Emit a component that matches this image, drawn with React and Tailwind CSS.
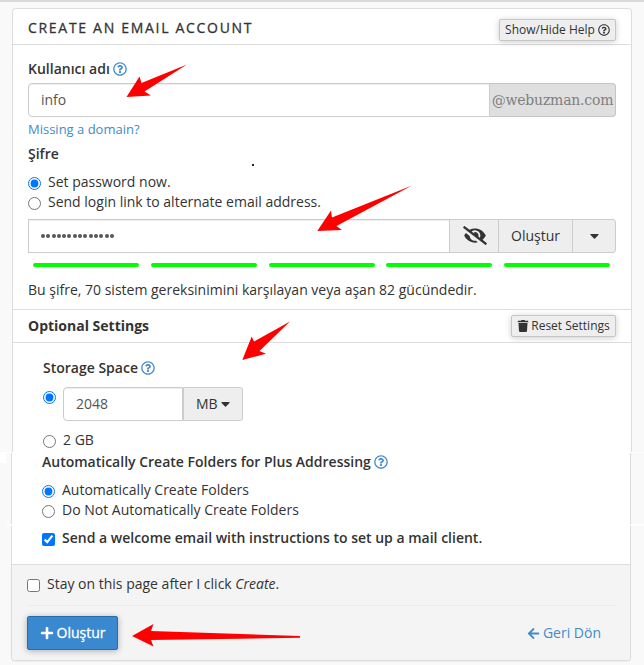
import { FaRegQuestionCircle, FaTrash, FaPlus, FaArrowLeft, FaEyeSlash } from 'react-icons/fa'

const STRENGTH_BARS = [1, 2, 3, 4, 5]

function HelpIcon() {
  return <FaRegQuestionCircle className="w-3.5 h-3.5 shrink-0 text-[#428bca]" />
}

function Caret() {
  return (
    <svg className="w-[9px] h-[5px]" viewBox="0 0 9 5" fill="currentColor">
      <path d="M0.8 0 H8.200 Q8.900 0.300 8.400 0.900 L5 4.600 Q4.500 5 4 4.600 L0.600 0.900 Q0.100 0.300 0.800 0 Z" />
    </svg>
  )
}

function Option({ type = 'radio', name, checked, className = '', children }) {
  return (
    <label className={`flex items-center gap-[7px] h-5 ${className}`}>
      <input type={type} name={name} defaultChecked={checked} className="m-0 mt-0.5 w-[13px] h-[13px] shrink-0" />
      <span className="whitespace-nowrap">{children}</span>
    </label>
  )
}

function SmallButton({ className = '', children }) {
  return (
    <button
      type="button"
      className={`flex items-center justify-center h-[22px] bg-[#eee] border border-[#c6c6c6] rounded-[2px] text-xs whitespace-nowrap shadow-[0_1px_6px_rgba(0,0,0,0.2)] ${className}`}
    >
      {children}
    </button>
  )
}

// Hand drawn pointers that lie over the form
function Pointers() {
  return (
    <svg className="absolute inset-0 pointer-events-none" width="644" height="665" viewBox="0 0 644 665" fill="#ff0000">
      <path d="M187 64.5 L141.500 83 L139.500 76.500 L126.500 97 L151 95.500 L144.500 91.500 Z" />
      <path d="M412 185.500 L332 217.500 L331 210.500 L317.300 231 L342 230 L336.500 226 Z" />
      <path d="M290 321.500 L254 341.500 L251.700 336.500 L242.300 360 L266 353.700 L259.500 351 Z" />
      <path d="M300 636 L151 631 L153.500 624 L132 636 L153.500 646.500 L151 640 L300 637.700 Z" />
    </svg>
  )
}

export default function App() {
  return (
    <div className="relative w-[644px] h-[665px] overflow-hidden bg-[#f9f9f9] border-t-2 border-[#dadada] pt-1.5 pl-3 font-['Open_Sans','Noto_Sans',sans-serif] text-sm leading-5 text-[#333]">
      <section className="w-[620px] h-[444px] bg-white border border-b-0 border-[#ddd] rounded-t-[4px]">
        <header className="flex items-start justify-between h-9 pl-[15px] pr-[15px] border-b border-[#ddd]">
          <h1 className="mt-[9px] text-sm tracking-[1.7px] [-webkit-text-stroke:0.3px_#333]">CREATE AN EMAIL ACCOUNT</h1>
          <SmallButton className="mt-2.5 w-[117px] gap-[3px]">
            Show/Hide Help <FaRegQuestionCircle className="w-3 h-3" />
          </SmallButton>
        </header>

        <div className="h-[265px] px-[15px] pt-3.5 border-b border-[#ddd]">
          <div className="flex items-center gap-[3.5px] font-semibold">
            Kullanıcı adı <HelpIcon />
          </div>
          <div className="flex h-[34px] mt-1">
            <div className="flex-1 flex items-center px-3 border border-[#ccc] rounded-l-[4px] text-[#555] shadow-[inset_0_1px_1px_rgba(0,0,0,0.075)]">info</div>
            <div className="w-[126px] flex items-center justify-center bg-[#dfdfdf] border border-l-0 border-[#c4c4c4] rounded-r-[4px] font-['DejaVu_Serif',serif] text-[14px] tracking-[-0.2px] text-[#808080]">@webuzman.com</div>
          </div>
          <a className="block mt-0.5 text-[13px] text-[#428bca]">Missing a domain?</a>
          <div className="mt-[5px] font-semibold">Şifre</div>
          <Option name="password" checked className="mt-2">Set password now.</Option>
          <Option name="password">Send login link to alternate email address.</Option>
          <div className="flex h-[34px] mt-[7px]">
            <div className="flex-1 flex items-center px-3 border border-[#ccc] shadow-[inset_0_1px_1px_rgba(0,0,0,0.075)]">
              <div className="flex gap-[1.3px]">
                {Array.from({ length: 14 }).map((_, i) => (
                  <span key={i} className="w-1 h-1 rounded-full bg-[#555]" />
                ))}
              </div>
            </div>
            <div className="w-12 flex items-center justify-center bg-[#eee] border-y border-[#ccc]">
              <FaEyeSlash className="w-[24px] h-[19px] mb-0.5 ml-0.5" />
            </div>
            <div className="w-[74px] flex items-center justify-center bg-[#eee] border-y border-l border-[#ccc]">Oluştur</div>
            <div className="w-11 flex items-center justify-center bg-[#eee] border border-[#ccc] rounded-r-[3px]">
              <Caret />
            </div>
          </div>
          <div className="flex justify-between mt-2.5 pl-[5px] pr-1.5">
            {STRENGTH_BARS.map((bar) => (
              <span key={bar} className="w-[106px] h-1 rounded-full bg-[#00ff00]" />
            ))}
          </div>
          <p className="mt-[13px]">Bu şifre, 70 sistem gereksinimini karşılayan veya aşan 82 gücündedir.</p>
        </div>

        <div className="flex items-center justify-between h-[33px] px-[15px] border-b border-[#ddd]">
          <h2 className="font-bold">Optional Settings</h2>
          <SmallButton className="w-[105px] gap-[2px]">
            <FaTrash className="w-3 h-3" /> Reset Settings
          </SmallButton>
        </div>

        <div className="pl-[30px] pt-[15px]">
          <div className="flex items-center gap-[3.5px] font-semibold">
            Storage Space <HelpIcon />
          </div>
          <div className="flex items-start mt-[9px]">
            <input type="radio" name="quota" defaultChecked className="m-0 mt-1 w-[13px] h-[13px]" />
            <div className="ml-[7px] w-[120px] h-[34px] flex items-center px-3 border border-[#ccc] rounded-l-[4px] text-[#555] shadow-[inset_0_1px_1px_rgba(0,0,0,0.075)]">2048</div>
            <div className="w-[60px] h-[34px] flex items-center pl-3 gap-[3px] bg-[#eee] border border-[#ccc] rounded-r-[3px]">
              MB <Caret />
            </div>
          </div>
          <Option name="quota" className="mt-[9px]">2 GB</Option>
        </div>
      </section>

      <section className="-ml-px w-[620px] h-[209px] flex flex-col bg-white border border-t-0 border-[#ddd] rounded-b-[4px] shadow-[0_1px_1px_rgba(0,0,0,0.05)]">
        <div className="h-[112px] pl-[30px]">
          <div className="flex items-center gap-[3px] font-semibold">
            Automatically Create Folders for Plus Addressing <HelpIcon />
          </div>
          <Option name="folders" checked className="mt-2">Automatically Create Folders</Option>
          <Option name="folders">Do Not Automatically Create Folders</Option>
          <Option type="checkbox" checked className="mt-2 font-semibold">Send a welcome email with instructions to set up a mail client.</Option>
        </div>
        <footer className="flex-1 bg-[#f4f4f4] border-t border-[#ddd] rounded-b-[4px] px-[15px] pt-[9px]">
          <Option type="checkbox">
            Stay on this page after I click <em>Create</em>.
          </Option>
          <div className="flex items-center justify-between mt-[11px] pt-2.5 pr-3.5 border-t border-[#ebebeb]">
            <button type="button" className="w-[91px] h-[34px] flex items-center justify-center gap-[3px] bg-[#3a89d0] border border-[#2a6ea8] rounded-[2px] text-white [-webkit-text-stroke:0.3px_#fff] shadow-[0_1px_6px_rgba(0,0,0,0.3)]">
              <FaPlus className="w-3.5 h-3.5" /> Oluştur
            </button>
            <a className="flex items-center gap-[3px] text-[#428bca]">
              <FaArrowLeft className="w-[13px] h-[13px]" /> Geri Dön
            </a>
          </div>
        </footer>
      </section>

      {/* light breaks in the page background beside the panel */}
      <span className="absolute left-0 top-[450px] w-3 h-px bg-white" />
      <span className="absolute left-0 top-[450px] w-1.5 h-[11px] bg-white" />
      <span className="absolute right-0 top-[450px] w-3.5 h-px bg-white" />
      <span className="absolute left-[7px] top-[522px] w-[5px] h-0.5 bg-white" />
      <span className="absolute right-0 top-[522px] w-3.5 h-0.5 bg-white" />

      <span className="absolute left-[252px] top-[162px] w-0.5 h-0.5 bg-[#222]" />
      <div className="absolute -top-0.5 left-0">
        <Pointers />
      </div>
    </div>
  )
}
